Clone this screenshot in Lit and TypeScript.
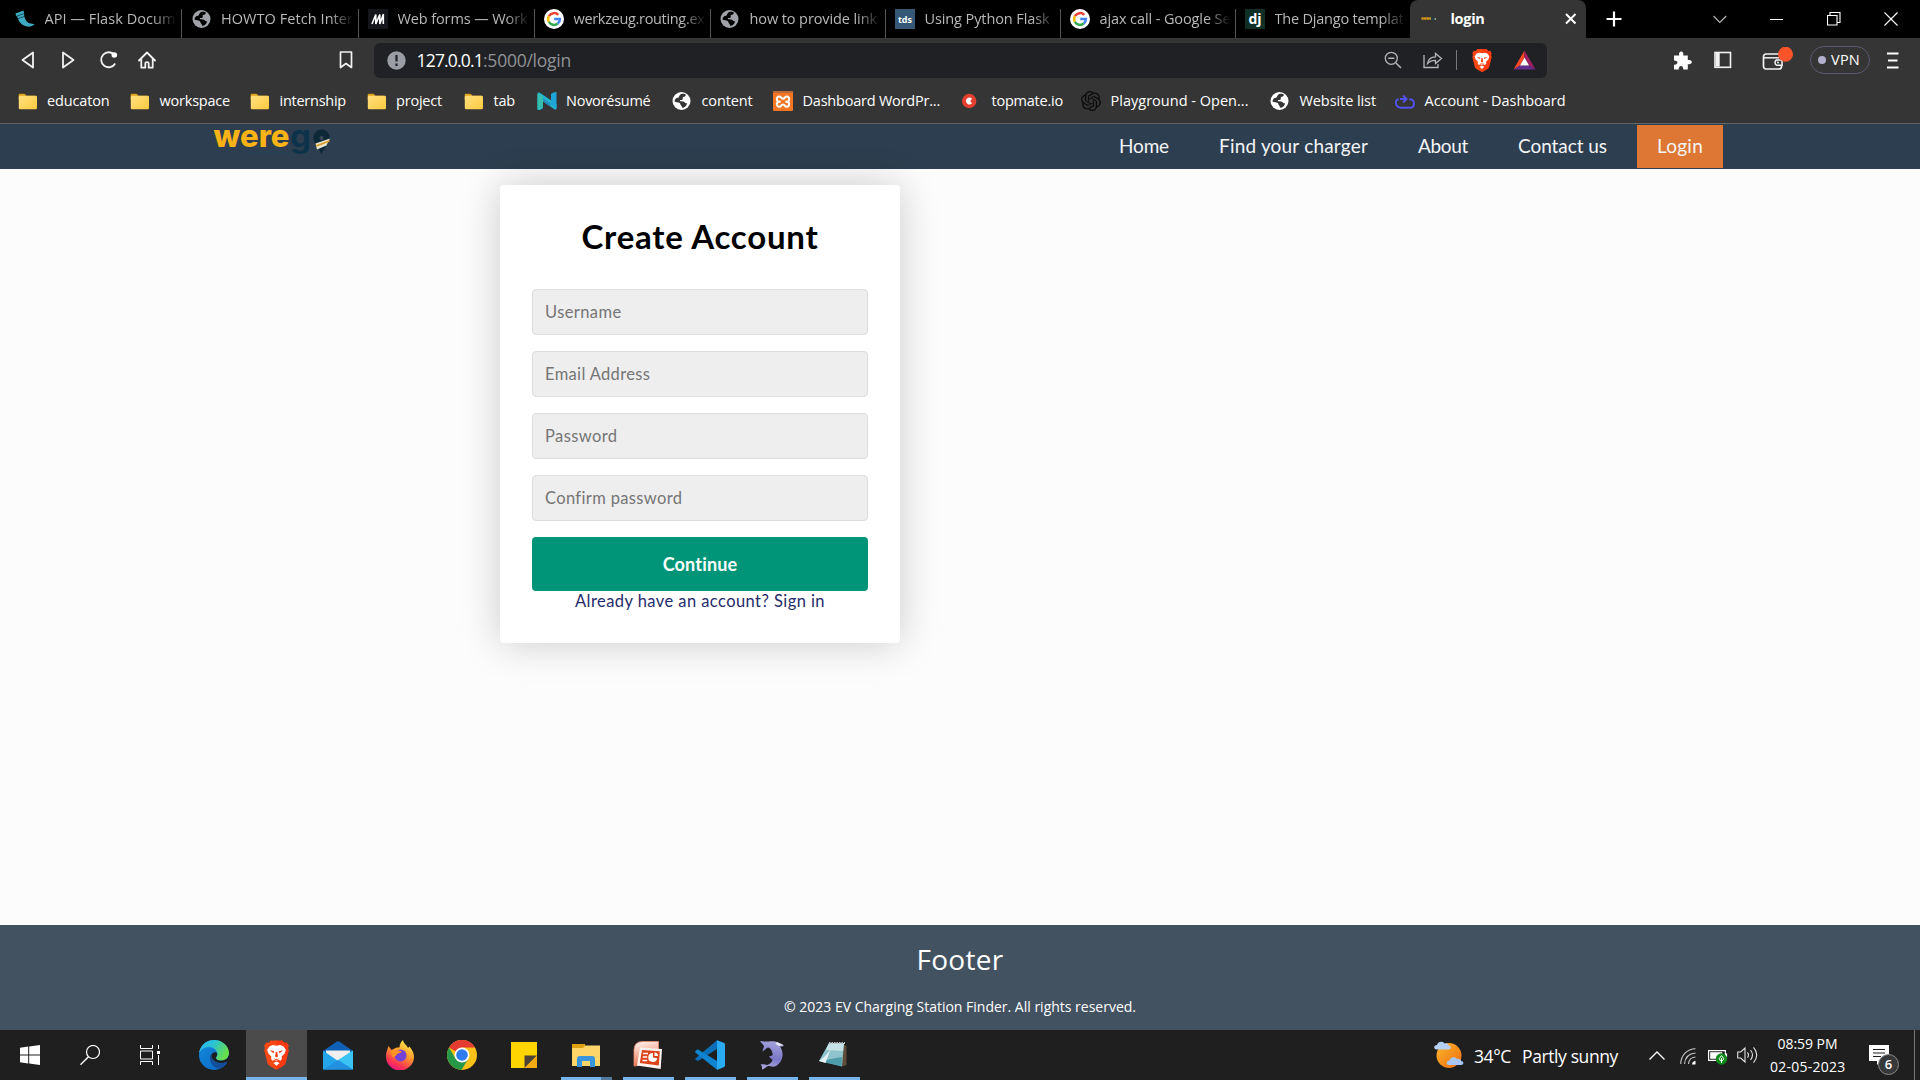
import { LitElement, html, css, svg, nothing, TemplateResult } from "lit";
import { customElement, property } from "lit/decorators.js";
import { classMap } from "lit/directives/class-map.js";

/** One line of text whose tracking is adjusted so that it fills a given width. */
@customElement("fit-text")
class FitText extends LitElement {
  @property({ type: Number }) w = 0;
  @property() text = "";
  static styles = css`
    :host { display: inline-block; white-space: pre; }
    .line { display: inline-block; }
  `;
  firstUpdated() {
    const el = this.renderRoot.querySelector(".line") as HTMLElement;
    const natural = el.getBoundingClientRect().width;
    const n = Math.max(1, this.text.length);
    if (this.w) {
      el.style.letterSpacing = `${(this.w - natural) / n}px`;
    }
  }
  render() {
    return html`<span class="line">${this.text}</span>`;
  }
}

const fit = (text: string, w: number) => html`<fit-text .text=${text} .w=${w}></fit-text>`;

const icon = (w: number, h: number, vb: string, body: TemplateResult | unknown) =>
  html`<svg width=${w} height=${h} viewBox=${vb} fill="none">${body}</svg>`;

const globe = (fg: string, bg: string) => icon(20, 20, "0 0 20 20", svg`
  <circle cx="9.500" cy="10" r="9" fill=${fg}/>
  <path d="M8.6 3.2c2.2-1 4.6-.3 5.6.8-1 .6-1 1.6-2.2 1.8-1.300.2-1.600 1-1.200 1.800.3.9-.5 1.500-1.800 1.500-1.200 0-1.500.6-.7 1.100 1.200.3 3-.2 4 .8.9.9 1.300 1.300 2.800 1.200-.4 2.600-2.400 4.400-5 4.600-.3-1-.2-1.900-1-2.400-1-.6-.5-1.700-1.400-2.300-1.400-.8-3.800-.9-5.200-1.600.2-2.400 1.600-3.400 3.400-3.700 1.300-.2.800-1.900 2.700-3.600z" fill=${bg}/>`);

const google = icon(20, 20, "0 0 20 20", svg`
  <circle cx="10" cy="10" r="10" fill="#fff"/>
  <path d="M4.900 7.200A5.900 5.900 0 0 1 14.300 5.900" stroke="#ea4335" stroke-width="2.500"/>
  <path d="M4.900 7.200a5.900 5.900 0 0 0 0 5.700" stroke="#fbbc05" stroke-width="2.500"/>
  <path d="M4.900 12.900a5.900 5.900 0 0 0 8.900 1.600" stroke="#34a853" stroke-width="2.500"/>
  <path d="M10.200 10h5.700a5.900 5.900 0 0 1-2.100 4.500" stroke="#4285f4" stroke-width="2.500"/>`);

const flask = icon(20, 18, "0 0 20 18", svg`
  <path d="M.5 3.500 8.500.5l.6 3c-.2 4 1.500 7.500 4.500 9.500l6 1.200c-2.200 2.200-5.600 3-8.600 2C5.500 15 3.200 10.500 2.300 6.600L1 6z" fill="#3babc3"/>
  <path d="m1.500 6.200 7.400-2.500M2.500 8.800l6.800-2.300" stroke="#0c2a33" stroke-width=".7"/>`);

const mIcon = icon(20, 20, "0 0 20 20", svg`<rect width="20" height="20" fill="#15161b"/>
  <path d="M4 15 7.800 5.500V15L11.800 5.500V15L15.500 5M15.300 5.500V15" stroke="#fff" stroke-width="1.600" stroke-linejoin="bevel"/>`);

const tile = (cls: string, t: string) => html`<span class="tile ${cls}">${t}</span>`;
const wereIcon = icon(20, 20, "0 0 20 20", svg`<path d="M.5 9.500h9.500" stroke="#d69a16" stroke-width="2.400" stroke-dasharray="2.300 .3"/><path d="M10.500 10h2.500" stroke="#183f52" stroke-width="2.500"/><path d="M13.500 10H15" stroke="#9a9a80" stroke-width="2"/>`);

const folder = icon(20, 17, "0 0 20 17", svg`
  <path d="M.7 2Q.7.800 2 .800h4.500l2 2H17v4H.700z" fill="#dfa21c"/>
  <rect x=".8" y="2.700" width="18.200" height="13.500" rx="1.200" fill="url(#fg)"/>
  <defs><linearGradient id="fg" x1="0" y1="0" x2="1" y2="1"><stop stop-color="#ffe07f"/><stop offset="1" stop-color="#fcc93f"/></linearGradient></defs>`);

const novo = icon(20, 20, "0 0 20 20", svg`
  <path d="M.5 3Q.500 1 2.500 1.500L19.500 13v4.500Q19 19.500 17 18L6 10.500V17Q3 20 .500 18.500z" fill="#21b4cf"/>
  <path d="M.5 2.500v16q3.500 0 5.500-3V5z" fill="#36bfae"/><path d="M14 3q2-2 5.500-2v16.500L14 13z" fill="#1fa5d8"/><path d="M6 10.500 14 16v-3L6 7z" fill="#2390bd"/>`);

const xampp = icon(20, 20, "0 0 20 20", svg`<rect width="20" height="20" rx="1" fill="#f37622"/><path d="M0 0h20v2H0z" fill="#bf6a36"/>
  <path d="M7.500 10.500C5 11.500 3.800 10 3.800 8.300S5 5.500 6.500 5.500c2 0 1.500 2.300 3.500 2.300s1.500-2.300 3.500-2.300c1.500 0 2.700 1.100 2.700 2.800s-1.200 3.200-3.700 2.200c2.500 0 3.700 1 3.700 2.500s-1.200 2.800-2.700 2.800c-2 0-1.500-2.300-3.500-2.300s-1.500 2.300-3.500 2.300c-1.500 0-2.700-1.300-2.700-2.800s1.200-2.500 3.700-2.500z" stroke="#fff" stroke-width="2"/>`);

const topmate = icon(20, 20, "0 0 20 20", svg`<circle cx="7.200" cy="10" r="7.200" fill="#e5402f"/><path d="M10 7.700A3.400 3.400 0 1 0 10 12.300L8.200 10z" fill="#fff"/>`);

const openai = icon(20, 20, "0 0 24 24", svg`<path d="M22.280 9.820a5.980 5.980 0 0 0-.520-4.910 6.050 6.050 0 0 0-6.510-2.900A6.070 6.070 0 0 0 4.980 4.180a5.980 5.980 0 0 0-4 2.900 6.050 6.050 0 0 0 .740 7.100 5.980 5.980 0 0 0 .510 4.910 6.050 6.050 0 0 0 6.520 2.900A5.980 5.980 0 0 0 13.260 24a6.060 6.060 0 0 0 5.770-4.210 5.990 5.990 0 0 0 4-2.900 6.060 6.060 0 0 0-.750-7.070zm-9.020 12.610a4.480 4.480 0 0 1-2.880-1.040l.140-.080 4.780-2.760a.790.790 0 0 0 .390-.680v-6.740l2.020 1.170v5.630a4.500 4.500 0 0 1-4.450 4.500zM3.600 18.300a4.470 4.470 0 0 1-.540-3.010l.140.080 4.780 2.760a.770.770 0 0 0 .780 0l5.840-3.370v2.370L9.740 19.950a4.500 4.500 0 0 1-6.140-1.650zM2.340 7.900a4.480 4.480 0 0 1 2.370-1.980v5.680a.770.770 0 0 0 .390.680l5.810 3.350-2.020 1.170-4.830-2.790A4.500 4.500 0 0 1 2.340 7.900zm16.600 3.850-5.840-3.390 2.020-1.160 4.830 2.790a4.490 4.490 0 0 1-.680 8.100v-5.680a.790.790 0 0 0-.400-.660zm2.010-3.020-.140-.080-4.770-2.780a.780.780 0 0 0-.790 0L9.410 9.230V6.900l4.860-2.870a4.500 4.500 0 0 1 6.680 4.700zM8.310 12.860 6.290 11.700V6.070a4.500 4.500 0 0 1 7.380-3.450l-.140.080L8.750 5.460a.790.790 0 0 0-.390.680zm1.100-2.370L12.010 9l2.600 1.500v3L12.010 15l-2.610-1.500z" fill="#0b0b0b"/>`);

const account = icon(20, 17, "0 0 20 17", svg`<path d="M3.500 6C.800 7 .3 9.500 1.200 11.700 2.200 13.900 4 14.700 6 14.700h8.500c3 0 4.500-2 4.500-4.300 0-2.600-2-4.200-4.700-4.200M5 6h6M8 2.500 11.600 6 8 9.500" stroke="#5352ee" stroke-width="1.900"/>`);

const lion = (w: number, h: number) => icon(w, h, "0 0 24 28", svg`
  <path d="M6.500 0h11l2 2.300 2.500-.3 1.800 3.200-.8 2 .8 2.500-3 11.800c-.3 1.200-1 2-2 2.700L13 27.700c-.7.400-1.300.4-2 0l-5.800-3.500c-1-.7-1.700-1.500-2-2.700L.2 9.700 1 7.200l-.8-2L2 2l2.500.3z" fill="#fb4713"/>
  <path d="M12 0h5.500l2 2.300 2.500-.3 1.800 3.200-.8 2 .8 2.500-3 11.800c-.3 1.200-1 2-2 2.700L13 27.700c-.4.200-.6.300-1 .3z" fill="#ff1f0c" opacity=".3"/>
  <path d="M12 5.200 15.500 4.500 18.500 5.500 21 9l-1.200 3.500-3 3.200.5 2-1.500 1.800-2-1-1.800 1.300-1.800-1.300-2 1-1.500-1.800.5-2-3-3.200L3 9l2.500-3.500 3-1zM12 20.200l3 1.500-3 2.500-3-2.500z" fill="#fff"/>
  <path d="M5.500 9.500 10 10.500 9 12.300zM18.500 9.500 14 10.500l1 1.800zM11.300 11h1.400l.7 4.500L12 16.500l-1.400-1zM9 17l3 1 3-1-3 2.300z" fill="#fb3d12"/>`);

const bat = icon(23, 20, "0 0 23 20", svg`<path d="M11.500.5.500 19.500 7 15.500l4.500-8z" fill="#ff4724"/><path d="M11.500.5l11 19-6.500-4-4.500-8z" fill="#9e1f63"/><path d="M.5 19.500h22l-6.500-4H7z" fill="#662d91"/><path d="m11.500 7.500 4.500 8H7z" fill="#fff"/>`);

const st = "#f2f2f2";
const ic = {
  back: icon(14, 18, "0 0 14 18", svg`<path d="M12 1.500v15L1.500 9z" stroke=${st} stroke-width="1.800" stroke-linejoin="round"/>`),
  fwd: icon(14, 18, "0 0 14 18", svg`<path d="M2 1.500v15L12.500 9z" stroke=${st} stroke-width="1.800" stroke-linejoin="round"/>`),
  reload: icon(20, 18, "0 0 20 18", svg`<path d="M15.500 4A7.500 7.500 0 1 0 16.200 12.500" stroke=${st} stroke-width="1.800"/><circle cx="15.300" cy="4" r="2.800" fill="#fff"/>`),
  home: icon(18, 18, "0 0 18 18", svg`<path d="m1 9.500 8-8 8 8M3.300 8v8.700h4v-4.500q0-1 1.700-1t1.700 1v4.500h4V8" stroke=${st} stroke-width="1.800" stroke-linejoin="round" stroke-linecap="round"/>`),
  mark: icon(14, 18, "0 0 14 18", svg`<path d="M1.500 1h11v15.500L7 12.500l-5.500 4z" stroke=${st} stroke-width="1.700" stroke-linejoin="round"/>`),
  info: icon(19, 19, "0 0 19 19", svg`<circle cx="9.500" cy="9.500" r="9.200" fill="#9a9da3"/><path d="M9.500 4v6.500M9.500 12.500V15" stroke="#202124" stroke-width="2.200"/>`),
  zoomOut: icon(18, 18, "0 0 18 18", svg`<circle cx="7.300" cy="7.300" r="6" stroke="#b4b5b7" stroke-width="1.300"/><path d="M4.200 7.300h6.200M12 12l5 5" stroke="#b4b5b7" stroke-width="1.500"/>`),
  share: icon(20, 18, "0 0 20 18", svg`<path d="M1 4v12.500h14V13M4.500 12.500c.5-4 3-6.500 8-6.700V2.500l6 5-6 5V9.300c-3.500-.1-5.800.8-8 3.200z" stroke="#b4b5b7" stroke-width="1.300"/>`),
  puzzle: icon(19, 19, "0 0 19 19", svg`<path d="M1 4.500h5.200c-.6-2.500.5-4 2-4s2.700 1.500 2 4h4.600v4.600c2.300-.6 4 .4 4 2s-1.700 2.600-4 2v5.400h-4.600c.2-2.400-.8-3.600-2.200-3.600s-2.400 1.200-2.200 3.600H1v-4.800c2.300.2 3.400-.8 3.400-2.100S3.300 9.200 1 9.400z" fill="#fff"/>`),
  side: icon(18, 18, "0 0 18 18", svg`<rect x="1" y="1.500" width="15.500" height="14.800" stroke=${st} stroke-width="1.600"/><path d="M2 2h3.700v13.500H2z" fill=${st}/>`),
  wallet: icon(32, 26, "0 0 32 26", svg`<rect x="2.500" y="7" width="18" height="15" rx="2.500" stroke=${st} stroke-width="1.700"/><path d="M3 10.800h15" stroke=${st} stroke-width="1.500"/><path d="M21 13h-5.500a3 3 0 0 0 0 5.200H21z" fill="#353535" stroke=${st} stroke-width="1.500"/><circle cx="17" cy="15.600" r="1" fill=${st}/><circle cx="24.500" cy="7.200" r="7.500" fill="#fb542b"/>`),
  menu: icon(12, 17, "0 0 12 17", svg`<path d="M0 1.500h11.500M1 8.500h9.500M0 15.500h11.500" stroke="#fff" stroke-width="1.800"/>`),
  tabX: icon(12, 12, "0 0 12 12", svg`<path d="m1 1 9.500 9.500M10.500 1 1 10.500" stroke="#fff" stroke-width="2"/>`),
  plus: icon(16, 16, "0 0 16 16", svg`<path d="M8 .5v15M.5 8h15" stroke="#fff" stroke-width="2.200"/>`),
  down: icon(14, 9, "0 0 14 9", svg`<path d="m.5 1 6.300 6.500L13.200 1" stroke="#bbb" stroke-width="1.100"/>`),
  min: icon(14, 3, "0 0 14 3", svg`<path d="M0 1.500h13" stroke="#fff" stroke-width="1"/>`),
  restore: icon(14, 14, "0 0 14 14", svg`<path d="M.5 3.500h9.500V13H.500zM3 3V.500h10V10.500h-2.500" stroke="#fff" stroke-width="1.100"/>`),
  close: icon(14, 14, "0 0 14 14", svg`<path d="m.5.500 13 13M13.500.500l-13 13" stroke="#fff" stroke-width="1.100"/>`),
};

const task = {
  win: icon(20, 20, "0 0 20 20", svg`<path d="M0 2.700 8.200 1.600v7.900H0zM9.200 1.500 20 0v9.500H9.200zM0 10.500h8.200v7.900L0 17.300zM9.200 10.500H20V20L9.200 18.500z" fill="#fff"/>`),
  search: icon(20, 20, "0 0 20 20", svg`<circle cx="13" cy="7" r="6.500" stroke="#fff" stroke-width="1.200"/><path d="M8.500 11.700.5 19.700" stroke="#fff" stroke-width="1.400"/>`),
  view: icon(20, 20, "0 0 20 20", svg`<path d="M.5 0v3.500h12V0M.500 20v-3.500h12V20M.500 6h12v8H.500zM18.500 0v4M18.500 10v10" stroke="#fff" stroke-width="1"/><path d="M17 6h3v3h-3z" fill="#fff"/>`),
  edge: icon(30, 30, "0 0 30 30", svg`<defs><linearGradient id="e1" x1="0" y1="0" x2="1" y2=".4"><stop stop-color="#2fb4ee"/><stop offset=".5" stop-color="#2bc3d2"/><stop offset="1" stop-color="#68df4c"/></linearGradient><linearGradient id="e2" x1="0" y1="0" x2="1" y2="1"><stop stop-color="#1489d8"/><stop offset="1" stop-color="#0b68c8"/></linearGradient></defs>
    <circle cx="15" cy="15" r="15" fill="url(#e2)"/>
    <path d="M0 14C.500 6 7 0 15 0c9 0 15 6.500 15 13 0 5-4 7.500-8 7.500-3.500 0-5-1.500-5-2.500 0-.8 1.300-1.500 1.300-4C18.300 10 14.500 7 10 7 5 7 1 10 0 14z" fill="url(#e1)"/>
    <path d="M12 14c-3 5 1 13.500 9 14.300 3-1.300 5.500-3.300 7-6.300-6 3-15 1.500-15.700-5.500z" fill="#114a93"/>
    <path d="M12.300 15c1.500-3.500 5.500-3.500 6-1 0 2-1.400 2.700-1.300 4 0 2 3 3 6 2.500 2.500-.3 4.500-1.200 5.500-2.500L30 15v8l-2.200-1.300c-6 3-15 1-15.500-6.700z" fill="#1d1e20"/>
    <path d="M12 15c-1 4 2 8 7.500 8.700 3 .3 6-.3 7.500-1.500 1-.5 1.500.2 1 .8-1.500 2.500-4 4.500-7 5.500C13 28.500 9.500 20 12 15z" fill="#124e9a"/>`),
  mail: icon(30, 29, "0 0 30 29", svg`<path d="M0 10 13 1q2-1.300 4 0l13 9v5H0z" fill="#0f61b5"/><path d="M3 9.500h24V20H3z" fill="#efefef"/><path d="M0 9.500 15 20 30 9.500V28.500H0z" fill="#24a4ea"/><path d="M30 9.500v19L15 19z" fill="#3bc4f3"/><path d="M0 28.500h30L15 19z" fill="#2191df"/>`),
  firefox: icon(30, 30, "0 0 30 30", svg`<defs><linearGradient id="f1" x1=".8" y1="0" x2=".3" y2="1"><stop stop-color="#fff44f"/><stop offset=".45" stop-color="#ff9a2c"/><stop offset=".8" stop-color="#fb3451"/><stop offset="1" stop-color="#e31587"/></linearGradient></defs>
    <path d="M3.500 6 6.500 10l3-1.500c2-1.500 4-1 5-1 0-3 1.500-6 3.500-7.500.5 4 3.500 4.500 5 8l1.500-1.500c3 3.500 4.500 7 4.500 10.500A14 13.700 0 0 1 1 16.500C.800 12.500 2.500 10 3.500 6z" fill="url(#f1)"/>
    <circle cx="15.500" cy="15.500" r="6" fill="#7542d8"/><path d="M6 10.500c4-2 8 0 11 1-1 1.500-4 1.500-5 2.500 0 2-3 2-3.500 4-1.500-2-3-5-2.500-7.500z" fill="#ff9225"/>`),
  chrome: icon(30, 30, "0 0 30 30", svg`<circle cx="15" cy="15" r="15" fill="#fbc116"/><path d="M15 15 2 7.500A15 15 0 0 1 28 7.500H15z" fill="#e53b30"/><path d="M2 7.500A15 15 0 0 0 14.500 30l7-11.500L15 15l-6.500 3.500z" fill="#279847"/><circle cx="15" cy="15" r="7.500" fill="#fff"/><circle cx="15" cy="15" r="5.800" fill="#2e7cf0"/>`),
  sticky: icon(26, 26, "0 0 26 26", svg`<path d="M0 0h26v26H0z" fill="#fed501"/><path d="M13.500 26V13.500H26L13.500 26z" fill="#4b4238"/><path d="M13.500 26 26 13.500V26z" fill="#f3a914"/>`),
  explorer: icon(28, 23, "0 0 28 23", svg`<path d="M0 0h13v4H0z" fill="#e0a110"/><path d="M0 4h11l2-2.500h15V22H0z" fill="#fed568"/><path d="M5 23V15q0-3 3-3h12q3 0 3 3v8h-5v-6h-8v6z" fill="#3a96dc"/>`),
  ppt: icon(30, 28, "0 0 30 28", svg`<defs><linearGradient id="p1" x1=".3" y1="0" x2=".5" y2="1"><stop stop-color="#fdeee8"/><stop offset=".4" stop-color="#f7bba8"/><stop offset="1" stop-color="#e86a45"/></linearGradient></defs><path d="M1 25V9Q1 .500 10 .500h15.500V8L10 24z" fill="url(#p1)" stroke="#e88a70" stroke-width=".8"/><path d="M7 6.500 29 8l-1.300 20L4 24.500z" fill="#fdf3ee"/><path d="m9 9 17.800 1.200-1 14.300L6.800 22z" fill="#dc4318"/><path d="M10 12.500h5M9.700 16h4.500M9.500 19.500h4.700" stroke="#fff" stroke-width="1.500"/><path d="M20 12a4.500 4.500 0 1 0 4.200 5.200L20 16.500z" fill="#fff"/><path d="M21.500 11.500v3.600h3.600q0-3.200-3.600-3.600z" fill="#fff"/>`),
  code: icon(30, 30, "0 0 30 30", svg`<path d="M.3 18.500 22 .300V9L3 21 .5 19.800z" fill="#0a6fb8"/><path d="M.3 11 2.700 9.200 22 21V29.700L.3 12.500z" fill="#0f84d0"/><path d="M22 .300 29.300 3Q30 3.500 30 4.500V25.500q0 1-.8 1.400L22 30z" fill="#2aaaf2"/>`),
  dolphin: icon(26, 30, "0 0 26 30", svg`<defs><linearGradient id="d1" x1=".6" y1="0" x2=".4" y2="1"><stop stop-color="#a6a4dc"/><stop offset=".6" stop-color="#7b78c8"/><stop offset="1" stop-color="#aaa7dc"/></linearGradient></defs><path d="M1 1c5 1 8 .5 11 .3C17 .800 20 3 25 5.500c-1 1-2.500 1-4 1C25.500 13 24 22 17 26c-3.500 1.500-6 0-8 0-2 .5-3 3-6 3.500 0-2 .5-3-1.500-5 2.500-.5 4.500-.500 6.500.5 3.500-1 5-3 5.500-5.500-1.500-.5-2.500-1.500-3.500-3.500 1.500.3 2.700 0 3.700-1C13.500 11 11.500 8 9 7.500 6 9 4.500 11.500 3.500 11.500 3.500 9 5 7.500 5 6 4 4 2 3 1 1z" fill="url(#d1)"/><path d="m18 2 6.500 3-4 1-4-2z" fill="#e8e8ef"/>`),
  notepad: icon(30, 28, "0 0 30 28", svg`<path d="M22 2l5.500 3v19L22 26z" fill="#5c4c38"/><path d="M10 2h15l-2 23L0 20z" fill="#8fc3cd"/><path d="M10 2h15l-1 8L7 9z" fill="#c5e2e6"/><path d="M0 20 23 16l-.5 9.500z" fill="#4f9dac"/><path d="M0 20q8-5 12-13L6.500 22z" fill="#e6f1f2"/><path d="M10 2h16" stroke="#bbb" stroke-width="2" stroke-dasharray="1.500 1"/>`),
};

const cloud = "M2.500 9.500C-.800 9-.500 5 3 5 3.500 1.500 9 .500 10.500 3.500c3-.6 4 1 4.200 2 3 .3 2.700 4 0 4z";
const tray = {
  weather: icon(30, 30, "0 0 30 30", svg`<defs><linearGradient id="w1" x1="0" y1="0" x2="1" y2="1"><stop stop-color="#fbb829"/><stop offset="1" stop-color="#ee6a12"/></linearGradient></defs><circle cx="15" cy="15.500" r="12.500" fill="url(#w1)"/><path d=${cloud} fill="#b5cff5"/><path transform="translate(12.500 15.500)" d=${cloud} fill="#a8c5f3"/>`),
  up: icon(16, 9, "0 0 16 9", svg`<path d="m.5 8.500 7.500-7.500 7.500 7.500" stroke="#fff" stroke-width="1.300"/>`),
  wifi: icon(17, 17, "0 0 17 17", svg`<path d="M.7 16C1 7 7 1 15.500.700M4.500 16C5 9.500 9 5.500 15.500 5M8.500 16c.3-4 3-6.700 7-7" stroke="#c9c9c9" stroke-width="1.100"/><path d="M12 16.500c.2-2 1.500-3.500 3.500-3.700v3.700z" fill="#fff"/>`),
  battery: icon(20, 16, "0 0 20 16", svg`<path d="M.6 1.600h16.800v9.800H.600zM18.500 4.500v4" stroke="#fff" stroke-width="1.200"/><path d="M2.200 3.200h12v6.600h-12z" fill="#fff"/><circle cx="13.500" cy="10" r="5.700" fill="#0e8a1b"/><path d="M13.500 6.500 11.300 9.500q.2 2.300 2.200 2.300t2.200-2.300zM13.500 9v5" stroke="#fff" stroke-width="1"/>`),
  sound: icon(22, 18, "0 0 22 18", svg`<path d="M.7 6h3L8 2v14l-4.300-4h-3zM10.500 6.300q2 2.700 0 5.400M13.500 4q4 5 0 10M16.500 1.300q6.500 7.700 0 15.400" stroke="#e2e2e2" stroke-width="1.100"/>`),
  note: icon(20, 20, "0 0 20 20", svg`<path d="M0 0h20v16H12l-4 4v-4H0z" fill="#fff"/><path d="M4 4.500h12M4 8h12M4 11.500h8" stroke="#1f1f1f" stroke-width="1.200"/>`),
};

interface Tab { icon: unknown; text: string; w: number; cls?: string; }
const tabs: Tab[] = [
  { icon: flask, text: "API — Flask Docum", w: 131, cls: "first" },
  { icon: globe("#a0a3a8", "#000"), text: "HOWTO Fetch Inter", w: 132 },
  { icon: mIcon, text: "Web forms — Work", w: 130 },
  { icon: google, text: "werkzeug.routing.ex", w: 131 },
  { icon: globe("#a0a3a8", "#000"), text: "how to provide link", w: 127.5 },
  { icon: tile("tds", "tds"), text: "Using Python Flask", w: 125 },
  { icon: google, text: "ajax call - Google Se", w: 131 },
  { icon: tile("dj", "dj"), text: "The Django templat", w: 129 },
  { icon: wereIcon, text: "login", w: 34, cls: "active" },
];

interface Mark { icon: unknown; text: string; w: number; }
const marks: Mark[] = [
  { icon: folder, text: "educaton", w: 62.5 },
  { icon: folder, text: "workspace", w: 70.5 },
  { icon: folder, text: "internship", w: 66.5 },
  { icon: folder, text: "project", w: 46 },
  { icon: folder, text: "tab", w: 21.5 },
  { icon: novo, text: "Novorésumé", w: 84.500 },
  { icon: globe("#fff", "#353535"), text: "content", w: 51 },
  { icon: xampp, text: "Dashboard WordPr...", w: 137.500 },
  { icon: topmate, text: "topmate.io", w: 71.500 },
  { icon: openai, text: "Playground - Open...", w: 138 },
  { icon: globe("#fff", "#353535"), text: "Website list", w: 76.500 },
  { icon: account, text: "Account - Dashboard", w: 141 },
];

@customElement("browser-chrome")
class BrowserChrome extends LitElement {
  static styles = css`
    :host { display: block; font-family: "Open Sans", "Noto Sans", sans-serif; color: #fff; }
    svg { display: block; flex: none; }
    .strip { display: grid; height: 38px; background: #000; grid-template-columns: 182px 176.500px 176px 176px 175px 175px 175px 174.500px 176px 1fr; }
    .tab { display: flex; align-items: center; box-sizing: border-box; height: 38px; padding-left: 9.500px; min-width: 0; overflow: hidden; font-size: 14.500px; color: #b8b8b8; }
    .tab.first { padding-left: 14.500px; }
    .pic { width: 20px; margin-right: 9.500px; flex: none; }
    .first .pic { margin-right: 10px; }
    .cap { flex: 1; margin-right: 2px; -webkit-mask-image: linear-gradient(90deg, #000 calc(100% - 26px), transparent calc(100% - 2px)); line-height: 24px; }
    .bar { width: 1px; height: 29px; align-self: end; background: #555; }
    .tab.active { background: #353535; border-radius: 8px 8px 0 0; color: #fff; font-weight: 700; padding: 0 9px 0 11px; }
    .active .cap { -webkit-mask-image: none; }
    .tile { display: flex; width: 20px; height: 20px; align-items: center; justify-content: center; color: #fff; font-weight: 700; line-height: 1; }
    .tds { background: #355876; font-size: 9px; }
    .dj { background: #0f2e26; font-size: 14px; }
    .controls { display: grid; align-items: center; grid-template-columns: 107px 57px 57px 57px 14px; padding-left: 19.500px; }
    .tools { display: grid; height: 45px; background: #353535; align-items: center; box-sizing: border-box; padding: 0 0 1px 21px; grid-template-columns: 40px 37.500px 39.500px 201px 35px 1173px 126px 41px 47px 49px 77px 12px; }
    .url { display: flex; align-items: center; height: 35px; box-sizing: border-box; background: #202124; border-radius: 6px; padding: 0 11px 0 13px; font-size: 17.500px; }
    .addr { margin-left: 10.500px; flex: 1; }
    .rest { color: #909396; }
    .acts { display: flex; align-items: center; }
    .vr { width: 1px; height: 20px; background: #777; margin: 0 15px 0 13px; }
    .g1 { margin-right: 21px; }
    .vpn { display: flex; align-items: center; box-sizing: border-box; width: 60px; height: 28px; border: 1.500px solid #5b5a72; border-radius: 14px; padding: 0 0 1px 7px; gap: 5px; font-size: 14.500px; }
    .dot { width: 8px; height: 8px; border-radius: 4px; background: #b3b0cd; }
    .marks { display: grid; align-items: center; background: #353535; border-bottom: 1px solid #636363; box-sizing: border-box; height: 41px; padding: 0 0 4px 17.500px; font-size: 14.500px; grid-template-columns: 112.500px 120px 116.500px 97.500px 72.500px 135.500px 101px 189px 119px 189px 125px 180px; }
    .mark { display: flex; align-items: center; }
    .mark .pic { margin-right: 9.500px; }
    .mark fit-text { padding-bottom: 2px; }
  `;
  render() {
    return html`
      <div class="strip">
        ${tabs.map((t, i) => html`<div class="tab ${t.cls ?? ""}">
          <span class="pic">${t.icon}</span><span class="cap">${fit(t.text, t.w)}</span>
          ${t.cls === "active" ? ic.tabX : i < 7 ? html`<span class="bar"></span>` : nothing}
        </div>`)}
        <div class="controls">${ic.plus}${ic.down}${ic.min}${ic.restore}${ic.close}</div>
      </div>
      <div class="tools">
        ${ic.back}${ic.fwd}${ic.reload}${ic.home}${ic.mark}
        <div class="url">
          ${ic.info}
          <span class="addr">${fit("127.0.0.1", 66.5)}<span class="rest">${fit(":5000/login", 88)}</span></span>
          <span class="acts"><span class="g1">${ic.zoomOut}</span>${ic.share}<span class="vr"></span><span class="g1">${lion(20, 23)}</span>${bat}</span>
        </div>
        <span></span>
        ${ic.puzzle}${ic.side}${ic.wallet}
        <div class="vpn"><span class="dot"></span>${fit("VPN", 29)}</div>
        ${ic.menu}
      </div>
      <div class="marks">
        ${marks.map((m) => html`<div class="mark"><span class="pic">${m.icon}</span>${fit(m.text, m.w)}</div>`)}
      </div>`;
  }
}

const fields = [
  { label: "Username", type: "text", track: 0.4 },
  { label: "Email Address", type: "email", track: 0.35 },
  { label: "Password", type: "password", track: 0.4 },
  { label: "Confirm password", type: "password", track: 0.35 },
];

@customElement("site-page")
class SitePage extends LitElement {
  static styles = css`
    :host { display: flex; flex-direction: column; height: 906px; background: #fcfcfc; font-family: Lato, "Open Sans", sans-serif; }
    .nav { display: flex; height: 45px; background: #2d3e50; color: #fff; box-sizing: border-box; padding: 1px 197px 1px 213px; font-size: 19px; }
    .logo { display: block; overflow: visible; }
    .links { display: flex; flex: 1; justify-content: flex-end; gap: 10px; }
    .link { padding: 0 20px; line-height: 42px; color: #f4f5f6; text-decoration: none; }
    .link.on { background: #dd7733; }
    .main { flex: 1; padding: 16px 0 0 500px; }
    .card { position: relative; display: flex; flex-direction: column; box-sizing: border-box; width: 400px; height: 458px; padding: 32px; background: #fff; border-radius: 4px; box-shadow: 0 0 40px rgba(0, 0, 0, .2); }
    .title { margin: 0 0 32px; height: 40px; line-height: 39px; text-align: center; font-size: 33px; font-weight: 700; color: #000; flex: none; }
    .field { display: block; flex: none; box-sizing: border-box; width: 100%; height: 46px; margin-bottom: 16px; border: 1px solid #ddd; border-radius: 4px; background: #eee; padding: 0 12px; font: 16.500px Lato, "Open Sans", sans-serif; outline: none; }
    .field::placeholder { color: #757575; opacity: 1; }
    .go { height: 54px; flex: none; border: 0; border-radius: 4px; background: #009578; color: #fff; font: 700 18px Lato, "Open Sans", sans-serif; padding: 0; }
    .alt { height: 20px; flex: none; text-align: center; font-size: 16.500px; line-height: 20px; color: #252c6a; text-decoration: none; }
    .foot { height: 105px; background: #435261; color: #fff; text-align: center; font-family: "Open Sans", sans-serif; }
    .ft { margin: 0; padding-top: 13px; font-size: 28px; line-height: 42px; font-weight: 400; }
    .fc { margin: 0; padding-top: 16px; font-size: 14px; line-height: 22px; }
  `;
  render() {
    return html`
      <div class="nav">
        <svg class="logo" width="118" height="34" viewBox="0 0 118 34">
          <g font-family="Inter" font-weight="800" font-size="31">
            <text x="0.500" y="21.500" fill="#fcb316" textLength="76" lengthAdjust="spacingAndGlyphs">were</text>
            <text x="77" y="21.500" fill="#0d334b" textLength="21" lengthAdjust="spacingAndGlyphs" font-weight="700">g</text>
          </g>
          <path d="M36 28h42" stroke="#254158" stroke-width="1.800" stroke-dasharray="2 1.500"/>
          <path d="M108.500 4.500a8.300 8.300 0 0 1 8.300 8.300c0 6-5.500 9-8.300 16.500-2.800-7.500-8.300-10.500-8.300-16.500a8.300 8.300 0 0 1 8.300-8.300z" fill="#0d2937"/>
          <circle cx="108.500" cy="13" r="2" fill="#3c4b55"/>
          <path d="m102.500 18.500 14.500-5-3.500 7-9.500 4z" fill="#e9e3d0"/><path d="m103 21 13.500-5" stroke="#d79a22" stroke-width="1.500"/>
        </svg>
        <nav class="links">
          <a class="link">${fit("Home", 50)}</a>
          <a class="link">${fit("Find your charger", 149)}</a>
          <a class="link">${fit("About", 50)}</a>
          <a class="link">${fit("Contact us", 89)}</a>
          <a class="link on">${fit("Login", 46)}</a>
        </nav>
      </div>
      <div class="main">
        <div class="card">
          <h1 class="title">${fit("Create Account", 237)}</h1>
          ${fields.map((f) => html`<input class="field" type=${f.type} placeholder=${f.label} style="letter-spacing:${f.track}px">`)}
          <button class="go">${fit("Continue", 75)}</button>
          <a class="alt">${fit("Already have an account? Sign in", 250)}</a>
        </div>
      </div>
      <div class="foot">
        <h2 class="ft">${fit("Footer", 87)}</h2>
        <p class="fc">${fit("© 2023 EV Charging Station Finder. All rights reserved.", 352)}</p>
      </div>`;
  }
}

const apps: { icon: unknown; state?: string }[] = [
  { icon: task.edge },
  { icon: lion(25, 30), state: "current" },
  { icon: task.mail },
  { icon: task.firefox },
  { icon: task.chrome },
  { icon: task.sticky },
  { icon: task.explorer, state: "open multi" },
  { icon: task.ppt, state: "open" },
  { icon: task.code, state: "open" },
  { icon: task.dolphin, state: "open" },
  { icon: task.notepad, state: "open" },
];

@customElement("task-bar")
class TaskBar extends LitElement {
  static styles = css`
    :host { display: flex; height: 50px; background: #1f1f20; color: #fff; font-family: "Open Sans", "Noto Sans", sans-serif; }
    svg { display: block; flex: none; }
    .sys { display: grid; grid-template-columns: 60px 60px 64px; align-items: center; }
    .sys svg { margin-left: 20px; }
    .apps { display: flex; gap: 1px; flex: 1; }
    .app { display: grid; width: 61px; height: 50px; grid-template-rows: 47px 3px; justify-items: center; align-items: center; }
    .app svg { margin: 3px 1px 0 0; }
    .line { width: 51px; height: 3px; }
    .open .line { background: #76b4ee; }
    .multi .line { background: linear-gradient(90deg, #76b4ee 40px, #55799c 40px); }
    .current { background: #4b4b4c; }
    .current .line { width: 61px; background: #76b4ee; }
    .tray { display: flex; align-items: center; height: 50px; }
    .temp { font-size: 17.500px; margin-left: 10px; width: 48px; padding-top: 1px; }
    .sky { font-size: 17.500px; width: 127px; padding-top: 1px; }
    .i1 { width: 31px; } .i2 { width: 28px; padding-top: 2px; } .i3 { width: 29px; padding-top: 3px; } .i4 { width: 33px; }
    .clock { width: 75px; text-align: center; font-size: 14px; line-height: 23px; }
    .clock span { display: block; }
    .note { position: relative; margin-left: 24px; width: 45px; height: 20px; }
    .count { position: absolute; left: 9px; top: 9px; box-sizing: border-box; width: 21px; height: 21px; border: 1px solid #8a8a8a; border-radius: 11px; background: #37383a; font-size: 13px; font-weight: 600; line-height: 19px; text-align: center; }
    .end { width: 5px; height: 50px; border-left: 1px solid #777; }
  `;
  render() {
    return html`
      <div class="sys">${task.win}${task.search}${task.view}</div>
      <div class="apps">
        ${apps.map((a) => {
          const s = a.state ?? "";
          return html`<div class=${classMap({ app: true, open: s.includes("open"), multi: s.includes("multi"), current: s === "current" })}>${a.icon}<span class="line"></span></div>`;
        })}
      </div>
      <div class="tray">
        ${tray.weather}
        <span class="temp">${fit("34°C", 37)}</span><span class="sky">${fit("Partly sunny", 96)}</span>
        <span class="i1">${tray.up}</span><span class="i2">${tray.wifi}</span><span class="i3">${tray.battery}</span><span class="i4">${tray.sound}</span>
        <div class="clock"><span>${fit("08:59 PM", 60)}</span><span>${fit("02-05-2023", 75.5)}</span></div>
        <div class="note">${tray.note}<span class="count">6</span></div>
        <span class="end"></span>
      </div>`;
  }
}

@customElement("app-root")
class AppRoot extends LitElement {
  static styles = css`
    :host { display: flex; flex-direction: column; width: 1920px; height: 1080px; overflow: hidden; background: #fcfcfc; }
  `;
  render() {
    return html`<browser-chrome></browser-chrome><site-page></site-page><task-bar></task-bar>`;
  }
}
